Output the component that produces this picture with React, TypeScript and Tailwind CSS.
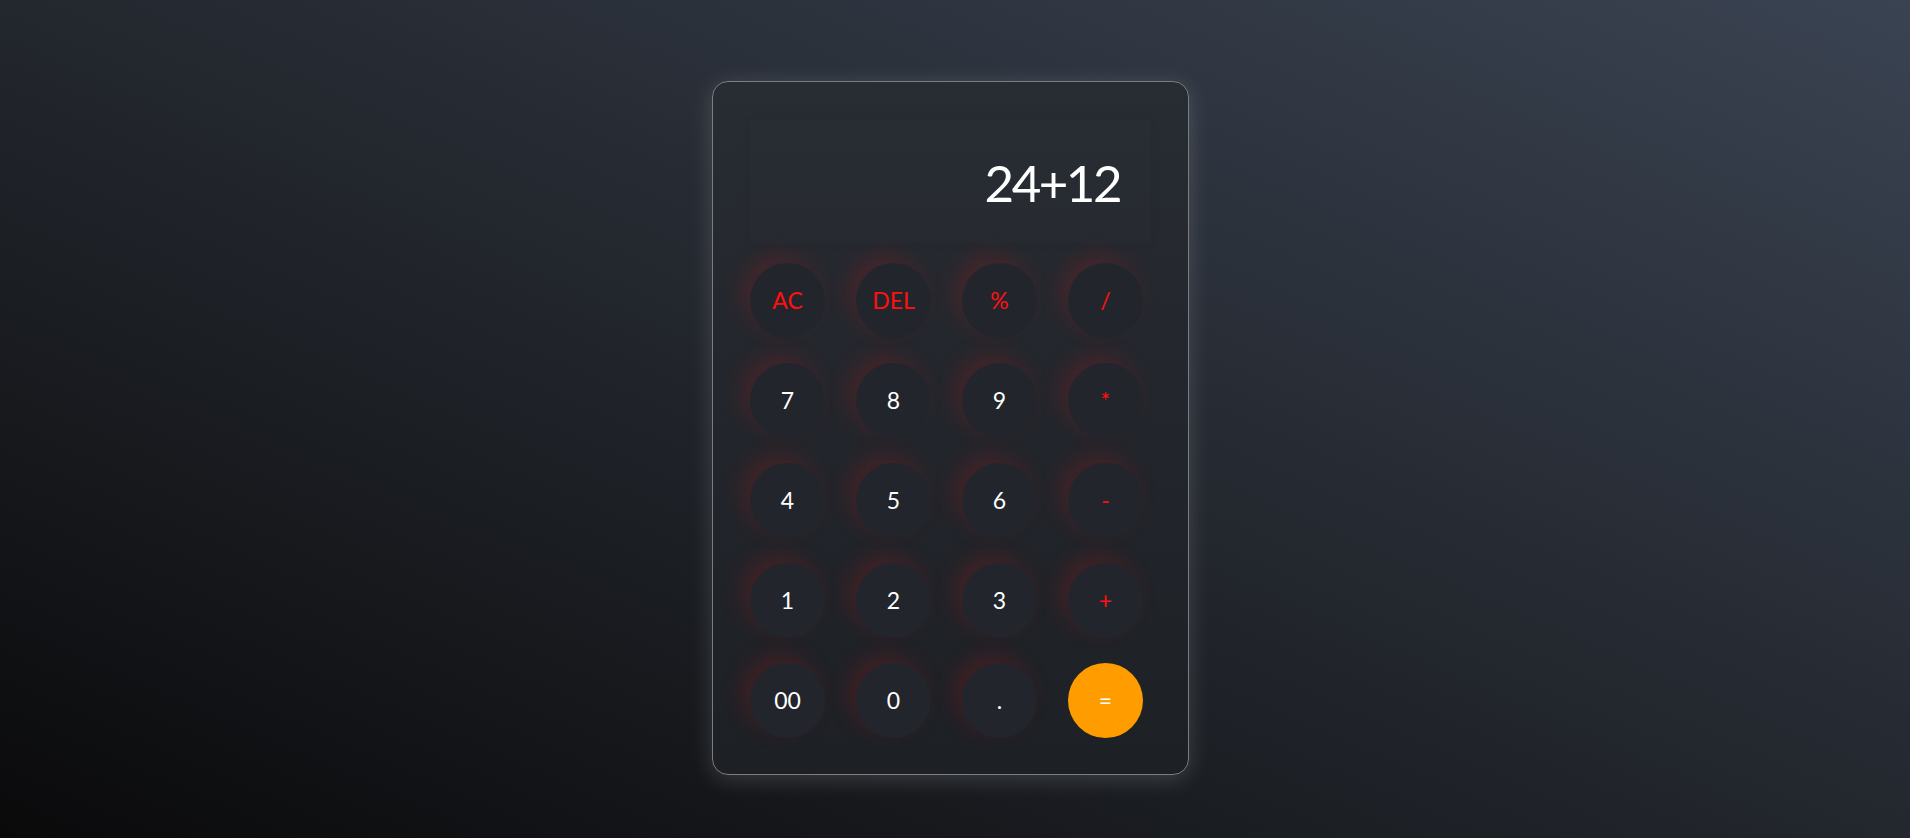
import React from "react";

type Key = { label: string; kind: "op" | "num" | "eq" };

const keys: Key[] = [
  { label: "AC", kind: "op" },
  { label: "DEL", kind: "op" },
  { label: "%", kind: "op" },
  { label: "/", kind: "op" },
  { label: "7", kind: "num" },
  { label: "8", kind: "num" },
  { label: "9", kind: "num" },
  { label: "*", kind: "op" },
  { label: "4", kind: "num" },
  { label: "5", kind: "num" },
  { label: "6", kind: "num" },
  { label: "-", kind: "op" },
  { label: "1", kind: "num" },
  { label: "2", kind: "num" },
  { label: "3", kind: "num" },
  { label: "+", kind: "op" },
  { label: "00", kind: "num" },
  { label: "0", kind: "num" },
  { label: ".", kind: "num" },
  { label: "=", kind: "eq" },
];

export default function App() {
  return (
    <div
      className="min-h-screen w-full bg-[linear-gradient(to_top_right,#0a0a0b_0%,#23272e_50%,#3a4352_100%)] flex justify-center items-start pt-[81px] pr-[9px]"
      style={{ fontFamily: "Lato, 'Open Sans', sans-serif" }}
    >
      <div className="w-[477px] h-[694px] rounded-[16px] border border-[#7a7d82] bg-[linear-gradient(to_bottom,#282c33,#1d2025)] shadow-[0_4px_22px_rgba(255,255,255,0.16)] px-[37px] pt-[38px] pb-[36px] flex flex-col gap-[20px]">
        <div className="h-[123px] w-full bg-[rgba(255,255,255,0.006)] shadow-[0_0_10px_rgba(0,0,0,0.06)] flex items-center justify-end pr-[31px] pt-[2px]">
          <span className="text-[51px] leading-none text-white tracking-[-2.5px]">24+12</span>
        </div>
        <div className="grid grid-cols-[repeat(4,75px)] gap-x-[31px] gap-y-[25px]">
          {keys.map((k) => (
            <button
              key={k.label}
              className={
                k.kind === "eq"
                  ? "w-[75px] h-[75px] rounded-full bg-[#ff9d00] text-white text-[23px] flex items-center justify-center"
                  : k.kind === "op"
                  ? "w-[75px] h-[75px] rounded-full bg-[#22262c] text-[#ff1010] text-[23px] flex items-center justify-center shadow-[-8px_-8px_22px_rgba(200,25,25,0.2)]"
                  : "w-[75px] h-[75px] rounded-full bg-[#22262c] text-white text-[23px] flex items-center justify-center shadow-[-8px_-8px_22px_rgba(200,25,25,0.2)]"
              }
            >
              {k.label}
            </button>
          ))}
        </div>
      </div>
    </div>
  );
}
